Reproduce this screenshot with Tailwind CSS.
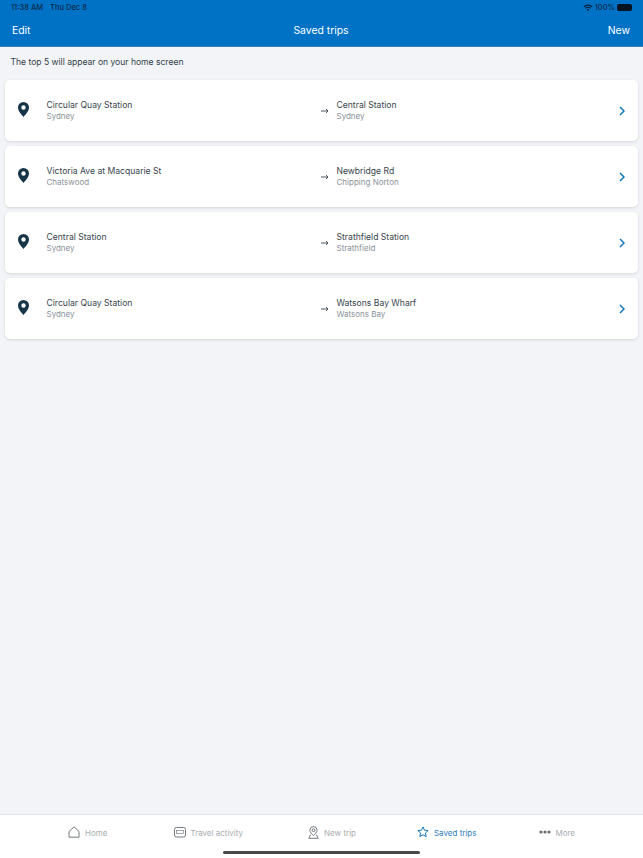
<!DOCTYPE html>
<html>
  <head>
    <meta charset="UTF-8" />
    <title>Saved trips</title>
    <meta name="viewport" content="width=device-width, initial-scale=1.0" />
    <script src="https://cdn.jsdelivr.net/npm/@tailwindcss/browser@4"></script>
  </head>
  <body class="bg-[#f2f4f7] font-['Inter',sans-serif]">
    <div class="h-[858px] flex flex-col overflow-hidden">
      <!-- header -->
      <header class="h-[47px] bg-[#0072c6] border-b border-[#3a7fb5] shrink-0 flex flex-col">
        <div class="h-[15px] px-[11px] flex items-center justify-between text-[7.5px] font-medium text-[#0b2a4a]">
          <div class="flex gap-[7px]"><span>11:38 AM</span><span>Thu Dec 8</span></div>
          <div class="flex items-center gap-[2px]">
            <svg width="10" height="8" viewBox="0 0 10 8" fill="none" stroke="#04213d" stroke-width="1.2"><path d="M.8 2.8a6 6 0 0 1 8.4 0M2.3 4.4a3.8 3.8 0 0 1 5.4 0"/><path d="M3.7 5.8 5 7.2l1.3-1.4a1.8 1.8 0 0 0-2.6 0z" fill="#04213d" stroke="none"/></svg>
            <span>100%</span>
            <span class="w-[15px] h-[6.5px] rounded-[2px] bg-[#04131f]"></span>
          </div>
        </div>
        <div class="flex-1 pl-[12px] pr-[13px] pt-[1px] flex items-center justify-between text-white text-[10.4px]">
          <span class="w-[40px]">Edit</span>
          <span>Saved trips</span>
          <span class="w-[40px] text-right">New</span>
        </div>
      </header>

      <main class="flex-1 px-[5px]">
        <p class="h-[33px] pl-[5.5px] pb-[3px] flex items-center text-[8.55px] text-[#333f48]">The top 5 will appear on your home screen</p>
        <div class="flex flex-col gap-[5px]">

          <div class="h-[61px] bg-white rounded-[5px] shadow-[0_1px_3px_rgba(0,0,0,0.12)] flex items-center">
            <svg class="ml-[13px] mt-[-2px] shrink-0" width="11" height="15" viewBox="0 0 11 15"><path fill-rule="evenodd" fill="#163549" d="M5.5 0A5.5 5.5 0 0 0 0 5.5C0 9 3.6 12.7 5.5 15 7.4 12.7 11 9 11 5.5A5.5 5.5 0 0 0 5.5 0zm0 3.3a2.2 2.2 0 1 1 0 4.4 2.2 2.2 0 0 1 0-4.4z"/></svg>
            <div class="ml-[17.5px] w-[274.5px] shrink-0">
              <div class="text-[8.6px] leading-[12px] text-[#38444d]">Circular Quay Station</div>
              <div class="text-[8px] leading-[11px] text-[#8a9299]">Sydney</div>
            </div>
            <svg class="shrink-0" width="8" height="6" viewBox="0 0 8 6" fill="none" stroke="#38444d" stroke-width=".9"><path d="M0 3h7M5 1l2 2-2 2"/></svg>
            <div class="ml-[7.5px] flex-1">
              <div class="text-[8.6px] leading-[12px] text-[#38444d]">Central Station</div>
              <div class="text-[8px] leading-[11px] text-[#8a9299]">Sydney</div>
            </div>
            <svg class="mr-[13px] shrink-0" width="6" height="10" viewBox="0 0 6 10" fill="none" stroke="#0f75bc" stroke-width="1.5"><path d="M1 1l4 4-4 4"/></svg>
          </div>

          <div class="h-[61px] bg-white rounded-[5px] shadow-[0_1px_3px_rgba(0,0,0,0.12)] flex items-center">
            <svg class="ml-[13px] mt-[-2px] shrink-0" width="11" height="15" viewBox="0 0 11 15"><path fill-rule="evenodd" fill="#163549" d="M5.5 0A5.5 5.5 0 0 0 0 5.5C0 9 3.6 12.7 5.5 15 7.4 12.7 11 9 11 5.5A5.5 5.5 0 0 0 5.5 0zm0 3.3a2.2 2.2 0 1 1 0 4.4 2.2 2.2 0 0 1 0-4.4z"/></svg>
            <div class="ml-[17.5px] w-[274.5px] shrink-0">
              <div class="text-[8.6px] leading-[12px] text-[#38444d]">Victoria Ave at Macquarie St</div>
              <div class="text-[8px] leading-[11px] text-[#8a9299]">Chatswood</div>
            </div>
            <svg class="shrink-0" width="8" height="6" viewBox="0 0 8 6" fill="none" stroke="#38444d" stroke-width=".9"><path d="M0 3h7M5 1l2 2-2 2"/></svg>
            <div class="ml-[7.5px] flex-1">
              <div class="text-[8.6px] leading-[12px] text-[#38444d]">Newbridge Rd</div>
              <div class="text-[8px] leading-[11px] text-[#8a9299]">Chipping Norton</div>
            </div>
            <svg class="mr-[13px] shrink-0" width="6" height="10" viewBox="0 0 6 10" fill="none" stroke="#0f75bc" stroke-width="1.5"><path d="M1 1l4 4-4 4"/></svg>
          </div>

          <div class="h-[61px] bg-white rounded-[5px] shadow-[0_1px_3px_rgba(0,0,0,0.12)] flex items-center">
            <svg class="ml-[13px] mt-[-2px] shrink-0" width="11" height="15" viewBox="0 0 11 15"><path fill-rule="evenodd" fill="#163549" d="M5.5 0A5.5 5.5 0 0 0 0 5.5C0 9 3.6 12.7 5.5 15 7.4 12.7 11 9 11 5.5A5.5 5.5 0 0 0 5.5 0zm0 3.3a2.2 2.2 0 1 1 0 4.4 2.2 2.2 0 0 1 0-4.4z"/></svg>
            <div class="ml-[17.5px] w-[274.5px] shrink-0">
              <div class="text-[8.6px] leading-[12px] text-[#38444d]">Central Station</div>
              <div class="text-[8px] leading-[11px] text-[#8a9299]">Sydney</div>
            </div>
            <svg class="shrink-0" width="8" height="6" viewBox="0 0 8 6" fill="none" stroke="#38444d" stroke-width=".9"><path d="M0 3h7M5 1l2 2-2 2"/></svg>
            <div class="ml-[7.5px] flex-1">
              <div class="text-[8.6px] leading-[12px] text-[#38444d]">Strathfield Station</div>
              <div class="text-[8px] leading-[11px] text-[#8a9299]">Strathfield</div>
            </div>
            <svg class="mr-[13px] shrink-0" width="6" height="10" viewBox="0 0 6 10" fill="none" stroke="#0f75bc" stroke-width="1.5"><path d="M1 1l4 4-4 4"/></svg>
          </div>

          <div class="h-[61px] bg-white rounded-[5px] shadow-[0_1px_3px_rgba(0,0,0,0.12)] flex items-center">
            <svg class="ml-[13px] mt-[-2px] shrink-0" width="11" height="15" viewBox="0 0 11 15"><path fill-rule="evenodd" fill="#163549" d="M5.5 0A5.5 5.5 0 0 0 0 5.5C0 9 3.6 12.7 5.5 15 7.4 12.7 11 9 11 5.5A5.5 5.5 0 0 0 5.5 0zm0 3.3a2.2 2.2 0 1 1 0 4.4 2.2 2.2 0 0 1 0-4.4z"/></svg>
            <div class="ml-[17.5px] w-[274.5px] shrink-0">
              <div class="text-[8.6px] leading-[12px] text-[#38444d]">Circular Quay Station</div>
              <div class="text-[8px] leading-[11px] text-[#8a9299]">Sydney</div>
            </div>
            <svg class="shrink-0" width="8" height="6" viewBox="0 0 8 6" fill="none" stroke="#38444d" stroke-width=".9"><path d="M0 3h7M5 1l2 2-2 2"/></svg>
            <div class="ml-[7.5px] flex-1">
              <div class="text-[8.6px] leading-[12px] text-[#38444d]">Watsons Bay Wharf</div>
              <div class="text-[8px] leading-[11px] text-[#8a9299]">Watsons Bay</div>
            </div>
            <svg class="mr-[13px] shrink-0" width="6" height="10" viewBox="0 0 6 10" fill="none" stroke="#0f75bc" stroke-width="1.5"><path d="M1 1l4 4-4 4"/></svg>
          </div>
        </div>
      </main>

      <!-- tab bar -->
      <footer class="relative h-[44px] bg-white border-t border-[#e2e4e6] shrink-0">
        <nav class="h-[34px] pl-[68px] flex items-center text-[8px] text-[#a8adb1]">
          <div class="flex items-center gap-[5px]">
            <svg width="12" height="12" viewBox="0 0 12 12" fill="none" stroke="#666c70" stroke-width=".9"><path d="M1 5.5 6 .8l5 4.7v5.7H1z" stroke-linejoin="round"/></svg>
            <span class="mt-[2px]">Home</span>
          </div>
          <div class="ml-[67px] flex items-center gap-[4px]">
            <svg width="12" height="11" viewBox="0 0 12 11" fill="none" stroke="#666c70" stroke-width=".9"><rect x=".5" y=".5" width="11" height="9.5" rx="2"/><rect x="2.5" y="3.5" width="7" height="3" stroke-width=".6"/></svg>
            <span class="mt-[2px]">Travel activity</span>
          </div>
          <div class="ml-[65px] flex items-center gap-[5px]">
            <svg width="11" height="13" viewBox="0 0 11 13" fill="none" stroke="#666c70" stroke-width=".9"><path d="M5.5.6a3.6 3.6 0 0 0-3.6 3.6c0 2.2 2.4 4 3.6 5.4 1.2-1.4 3.6-3.2 3.6-5.4A3.6 3.6 0 0 0 5.5.6z"/><circle cx="5.5" cy="4.2" r="1.4"/><path d="M2.6 8.6.8 12.3h9.4L8.4 8.6"/></svg>
            <span class="mt-[2px]">New trip</span>
          </div>
          <div class="ml-[61px] flex items-center gap-[5px] text-[#2d80c0]">
            <svg width="12" height="12" viewBox="0 0 12 12" fill="none" stroke="#0f75bc" stroke-width="1"><path d="M6 .9l1.5 3.3 3.6.4-2.7 2.4.8 3.6L6 8.8l-3.2 1.8.8-3.6L.9 4.6l3.6-.4z" stroke-linejoin="round"/></svg>
            <span class="mt-[2px]">Saved trips</span>
          </div>
          <div class="ml-[63px] flex items-center gap-[4px]">
            <svg width="12" height="4" viewBox="0 0 12 4" fill="#666c70"><circle cx="2" cy="2" r="1.6"/><circle cx="6" cy="2" r="1.6"/><circle cx="10" cy="2" r="1.6"/></svg>
            <span class="mt-[2px]">More</span>
          </div>
        </nav>
        <div class="absolute bottom-[4px] left-[223px] w-[197px] h-[3px] rounded-full bg-[#4a4a4c]"></div>
      </footer>
    </div>
  </body>
</html>
